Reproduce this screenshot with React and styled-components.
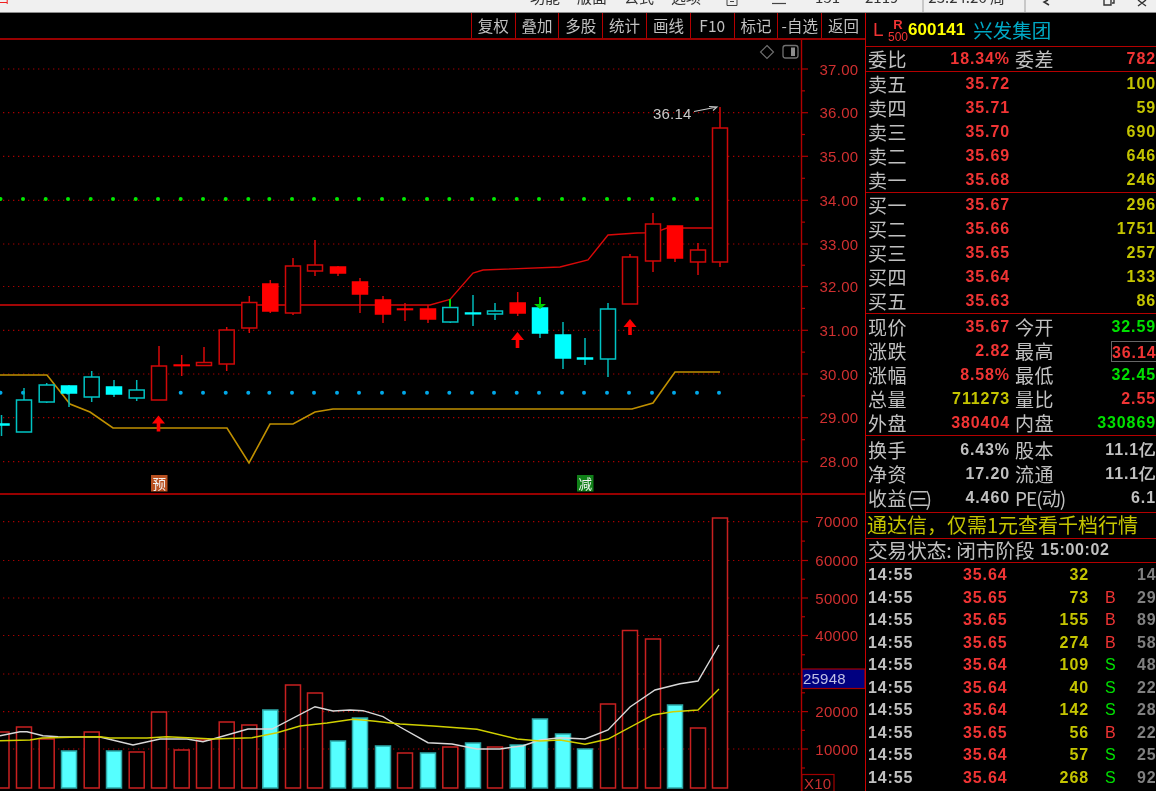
import React from "react";
import styled, { createGlobalStyle } from "styled-components";

const Global = createGlobalStyle`
  html, body { margin: 0; padding: 0; background: #000; overflow: hidden; }
  #root { width: 1156px; height: 791px; }
`;

const NUM = `"Liberation Sans", Arial, sans-serif`;
const CJK = `"Noto Sans CJK SC", "Noto Sans", sans-serif`;
const RED = "#f03434";
const YELLOW = "#c4c400";
const GREEN = "#00e000";
const GREY = "#c0c0c0";
const LINE = "#b40000";

const Page = styled.div`
  width: 1156px;
  height: 791px;
  overflow: hidden;
  background: #000;
  display: flex;
  flex-direction: column;
  filter: blur(0.35px);
`;

/* ---------- window title bar (mostly cut off at the top) ---------- */
const TitleBar = styled.div`
  height: 12px;
  flex: none;
  display: flex;
  background: #f0f0f0;
  border-bottom: 1.5px solid #8c8c8c;
  overflow: hidden;
  font: 15px/15px ${CJK};
  color: #333;
`;
const TitleItem = styled.span`
  margin-left: ${(p) => p.$left}px;
  margin-top: -11px;
  white-space: nowrap;
  flex: none;
`;
const TitleCell = styled.div`
  margin-left: ${(p) => p.$left}px;
  width: ${(p) => p.$width}px;
  flex: none;
  border-left: 2px solid #c8c8c8;
  border-right: 2px solid #c8c8c8;
  padding-left: 4px;
  display: flex;
`;
const TitleIcon = styled.svg`
  margin-left: ${(p) => p.$left}px;
  flex: none;
`;

const Main = styled.div`
  flex: 1;
  display: flex;
  min-height: 0;
`;
const ChartColumn = styled.div`
  width: 865px;
  flex: none;
  display: flex;
  flex-direction: column;
`;
const Toolbar = styled.div`
  height: 25px;
  flex: none;
  display: flex;
  justify-content: flex-end;
  border-bottom: 2px solid #980000;
`;
const ToolButton = styled.div`
  width: 43.8px;
  box-sizing: border-box;
  border-left: 1px solid ${LINE};
  color: ${GREY};
  font: 15.5px/24px ${CJK}, ${NUM};
  text-align: center;
  white-space: nowrap;
`;
const KPane = styled.div`
  height: 453px;
  flex: none;
  border-bottom: 2px solid #980000;
`;
const VolPane = styled.div`
  flex: 1;
  min-height: 0;
`;
const ChartSvg = styled.svg`
  display: block;
  width: 866px;
  height: 100%;
  overflow: visible;
`;
const AxisText = styled.text`
  font: 15px ${NUM};
  letter-spacing: 0.3px;
  fill: #d03030;
  text-anchor: end;
  dominant-baseline: central;
`;
const NoteText = styled.text`
  font: 15px ${NUM};
  letter-spacing: 0.2px;
  fill: ${(p) => p.$color};
  dominant-baseline: central;
`;
const BadgeText = styled.text`
  font: 13.5px ${CJK};
  fill: #f4f4f4;
  text-anchor: middle;
  dominant-baseline: central;
`;

/* ---------- quote panel ---------- */
const Panel = styled.div`
  flex: 1;
  min-width: 0;
  border-left: 1px solid #c80000;
  display: flex;
  flex-direction: column;
  overflow: hidden;
`;
const Section = styled.div`
  flex: none;
  border-bottom: 1px solid ${LINE};
  padding: ${(p) => p.$pad || "0"};
`;
const Header = styled(Section)`
  height: 33px;
  display: flex;
  align-items: center;
  padding-left: 7px;
`;
const Level = styled.span`
  font: 19px ${NUM};
  color: ${RED};
  width: 15px;
`;
const LevelStack = styled.span`
  display: flex;
  flex-direction: column;
  align-items: center;
  width: 20px;
  color: ${RED};
  font: 12px/12px ${NUM};
  margin-top: 2px;
`;
const LevelR = styled.span`
  font: bold 13px/13px ${NUM};
`;
const Code = styled.span`
  font: bold 17px ${NUM};
  color: #ffff00;
  letter-spacing: 0.1px;
`;
const StockName = styled.span`
  font: 19.5px ${CJK};
  color: #00a8c4;
  margin-left: 8px;
`;
const QuoteRow = styled.div`
  height: 24px;
  display: grid;
  grid-template-columns: 40px 102px 40px 1fr;
  column-gap: 0;
  align-items: center;
  padding-left: 2px;
  white-space: nowrap;
`;
const Label = styled.span`
  font: 19px/24px ${CJK};
  color: ${GREY};
  letter-spacing: 0.5px;
`;
const SecondLabel = styled(Label)`
  padding-left: 5px;
  grid-column: 3;
`;
const Narrow = styled.span`
  letter-spacing: ${(p) => p.$spacing}px;
`;
const Value = styled.span`
  font: bold 16px/24px ${NUM};
  letter-spacing: 0.9px;
  color: ${(p) => p.$color};
  text-align: right;
  grid-column: ${(p) => p.$col};
`;
const BoxedValue = styled(Value)`
  justify-self: end;
  line-height: 21px;
  height: 21px;
  width: 45px;
  box-sizing: border-box;
  border: 1px solid #666;
  border-right: none;
  margin-top: 1px;
`;
const Banner = styled(Section)`
  height: 25px;
  font: 20px/23px ${CJK};
  color: ${YELLOW};
  padding-left: 1px;
  white-space: nowrap;
`;
const Status = styled(Section)`
  height: 23px;
  display: flex;
  align-items: flex-start;
  padding-left: 2px;
  font: 19.6px/21px ${CJK};
  color: ${GREY};
  white-space: nowrap;
`;
const StatusTime = styled.span`
  font: bold 16px/21px ${NUM};
  letter-spacing: 0.6px;
  margin-left: 6px;
`;
const TickList = styled.div`
  padding-top: 1px;
`;
const TickRow = styled.div`
  height: 22.5px;
  display: grid;
  grid-template-columns: 95px 44px 82px 48px 1fr;
  align-items: center;
  padding-left: 2px;
  font: bold 16px/22px ${NUM};
  letter-spacing: 0.9px;
  white-space: nowrap;
`;
const TickCell = styled.span`
  color: ${(p) => p.$color};
  text-align: ${(p) => (p.$right ? "right" : "left")};
`;
const TickFlag = styled.span`
  padding-left: 16px;
  font-weight: normal;
  color: ${(p) => (p.$flag === "B" ? RED : GREEN)};
`;

/* ---------- data ---------- */
const XS = [1.5,24,46.7,69,91.7,114,136.7,159,181.7,204,226.7,249.3,270.3,293,315,338,360,383,405,428,450.3,473,495,517.7,540,563,585,608,630,653,675,698,720];
// wick top, wick bottom, body top, body bottom, kind
const CANDLES = [
  [415,436,424,425,"cf"],[388,432,400,432,"ch"],[383,403,385,402,"ch"],[385,407,386,393,"cf"],
  [371,402,377,397,"ch"],[380,397,387,394,"cf"],[380,401,390,398,"ch"],[346,400,366,400,"rh"],
  [355,376,365,365.6,"rf"],[347,365.5,362.5,365.5,"rh"],[327,371,330,364,"rh"],[296,333,302.5,328,"rh"],
  [280,313,284,311,"rf"],[258,315,266,313,"rh"],[240,276,265,271,"rh"],[266,276,267,273,"rf"],
  [278,313,282,294,"rf"],[296,323,300,314,"rf"],[303,321,309,309.6,"rf"],[305,323,309,319,"rf"],
  [307,323,307.5,322,"ch"],[295,326,313,313.8,"cf"],[303,320,311,314,"ch"],[292,316,303,313,"rf"],
  [308,338,308,333,"cf"],[322,369,335,358,"cf"],[338,365,358,359,"cf"],[303,377,309,359,"ch"],
  [254,304,257,304,"rh"],[213,272,224,261,"rh"],[226,262,226,258,"rf"],[243,275,250,262,"rh"],
  [107,267,128,262,"rh"],
];
const VOLS = [[732,"r"],[727,"r"],[739,"r"],[751,"c"],[732,"r"],[751,"c"],[752,"r"],[712,"r"],[750,"r"],[740,"r"],[722,"r"],[725,"r"],[710,"c"],[685,"r"],[693,"r"],[741,"c"],[718,"c"],[746,"c"],[753,"r"],[753,"c"],[747,"r"],[743,"c"],[747,"r"],[745,"c"],[719,"c"],[734,"c"],[749,"c"],[704,"r"],[630.5,"r"],[639,"r"],[705,"c"],[728,"r"],[518,"r"]];
const PRICE_Y = [[37,69],[36,112.7],[35,156.3],[34,200.3],[33,244],[32,286.5],[31,330.3],[30,374],[29,417.7],[28,461.7]];
const VOL_Y = [[70000,521.7],[60000,560.5],[50000,598],[40000,635.5],[30000,674],[20000,711.6],[10000,749]];

const RED_LINE = "0,305 430,305 450,299.5 473,273 483,270 560,267 588,260 608,235 637,233 645,232.7 660,230.6 667,228 714,228";
const GOLD_LINE = "0,375 47,375 70,404 90,412 113,428 227,428 249,463 270,424 293,424 315,412 333,409 632,409 653,403 675,372 720,372";
const WHITE_LINE = "0,735.7 20,731.7 27,731.7 43,735.7 58,736.7 100,737 133,745 160,739 187,739 203,741.7 213,739 248,729 272,729 315,706.7 333,711 350,710 363,710.7 383,716.7 400,727 428,742.7 452,744 477,749 500,749 523,745.7 540,740 560,737.7 585,739 608,730 630,707 655,690 680,683.7 698,681 719,645";
const YELLOW_LINE = "0,740.7 30,740 42,738 80,737 100,736.7 110,738 147,738 167,736.7 193,738 213,739 252,737.7 277,732.7 300,726 327,723 353,719.3 373,721 400,724 433,726 477,729.3 517,739 540,741 560,740 585,744.3 608,739 653,715 673,711.7 698,710 719,689";

const SELLS = [["卖五","35.72","100"],["卖四","35.71","59"],["卖三","35.70","690"],["卖二","35.69","646"],["卖一","35.68","246"]];
const BUYS = [["买一","35.67","296"],["买二","35.66","1751"],["买三","35.65","257"],["买四","35.64","133"],["买五","35.63","86"]];
const QUOTES = [
  ["现价","35.67",RED,"今开","32.59",GREEN],
  ["涨跌","2.82",RED,"最高","36.14",RED,true],
  ["涨幅","8.58%",RED,"最低","32.45",GREEN],
  ["总量","711273",YELLOW,"量比","2.55",RED],
  ["外盘","380404",RED,"内盘","330869",GREEN],
];
const FINANCE = [
  ["换手","6.43%","股本","11.1亿"],
  ["净资","17.20","流通","11.1亿"],
  [<>收益<Narrow $spacing={-3.5}>(三)</Narrow></>,"4.460",<Narrow $spacing={-1}>PE(动)</Narrow>,"6.1"],
];
const TICKS = [
  ["35.64","32","","14"],["35.65","73","B","29"],["35.65","155","B","89"],["35.65","274","B","58"],["35.64","109","S","48"],
  ["35.64","40","S","22"],["35.64","142","S","28"],["35.65","56","B","22"],["35.64","57","S","25"],["35.64","268","S","92"],
];
const TOOLS = ["复权","叠加","多股","统计","画线","F10","标记","-自选","返回"];

/* ---------- chart drawings ---------- */
const GridLines = ({ ys }) =>
  ys.map((y) => (
    <g key={y}>
      <line x1="3" x2="800" y1={y} y2={y} stroke="#a80000" strokeWidth="1.2" strokeDasharray="1.3 3.7" />
      <line x1="802" x2="808" y1={y} y2={y} stroke="#b00000" strokeWidth="1.2" />
    </g>
  ));
const MinorTicks = ({ ys }) =>
  ys.map((y) => <line key={y} x1="802" x2="805" y1={y} y2={y} stroke="#b00000" strokeWidth="1.2" />);

const Candle = ({ x, c }) => {
  const [wt, wb, bt, bb, kind] = c;
  const cyan = kind[0] === "c";
  const filled = kind[1] === "f";
  const stroke = cyan ? (filled ? "#00ffff" : "#00c4c4") : filled ? "#ff0000" : "#d00808";
  const wick = cyan ? "#00b8b8" : "#d80808";
  return (
    <g>
      <line x1={x} x2={x} y1={wt} y2={wb} stroke={wick} strokeWidth="1.5" />
      <rect x={x - 7.5} y={bt} width="15" height={Math.max(bb - bt, 0.6)} fill={filled ? (cyan ? "#00ffff" : "#ff0000") : "#000"} stroke={stroke} strokeWidth="1.5" />
    </g>
  );
};
const UpArrow = ({ x, y }) => (
  <path d={`M${x} ${y}l6.5 8h-4.7v8h-3.6v-8h-4.7z`} fill="#ff0000" />
);

const KLineChart = () => (
  <ChartSvg viewBox="0 40 866 453">
    <GridLines ys={PRICE_Y.map((p) => p[1])} />
    <MinorTicks ys={PRICE_Y.slice(0, -1).map((p, i) => (p[1] + PRICE_Y[i + 1][1]) / 2)} />
    <line x1="801.5" x2="801.5" y1="40" y2="493" stroke="#b00000" strokeWidth="1.4" />
    {XS.slice(0, 32).map((x) => <circle key={x} cx={x - 1} cy="199" r="2" fill="#00e800" />)}
    {XS.map((x) => <circle key={x} cx={x - 1} cy="392.8" r="2" fill="#00a8e8" />)}
    <polyline points={RED_LINE} fill="none" stroke="#d80808" strokeWidth="1.4" />
    <polyline points={GOLD_LINE} fill="none" stroke="#c09000" strokeWidth="1.6" />
    {XS.map((x, i) => <Candle key={x} x={x} c={CANDLES[i]} />)}
    <line x1="450" x2="450" y1="299" y2="307" stroke="#00d000" strokeWidth="2" />
    <line x1="540" x2="540" y1="297" y2="308" stroke="#00d000" strokeWidth="2" />
    <path d="M534 304h12l-6 5z" fill="#00d000" />
    <UpArrow x={158.5} y={415.5} />
    <UpArrow x={517.5} y={332} />
    <UpArrow x={630} y={319} />
    {PRICE_Y.map(([v, y]) => <AxisText key={v} x="858.5" y={y}>{v}.00</AxisText>)}
    <NoteText x="653" y="113" $color="#c8c8c8">36.14</NoteText>
    <path d="M694 111.5l23-4.5M709 106.5l8 .5-4 3.5" fill="none" stroke="#c8c8c8" strokeWidth="1.1" />
    <path d="M767 45.5l6.5 6.5-6.5 6.5-6.5-6.5z" fill="none" stroke="#707070" strokeWidth="1.1" />
    <rect x="783" y="45.5" width="15" height="12.5" rx="2.5" fill="none" stroke="#707070" strokeWidth="1.3" />
    <rect x="791" y="47.5" width="4" height="8.5" fill="#8c8c8c" />
    <rect x="151" y="475" width="16.5" height="16.5" fill="#b85020" />
    <BadgeText x="159.3" y="483">预</BadgeText>
    <rect x="577" y="475" width="16.5" height="16.5" fill="#108018" />
    <BadgeText x="585.3" y="483">减</BadgeText>
  </ChartSvg>
);

const VolumeChart = () => (
  <ChartSvg viewBox="0 495 866 296">
    <GridLines ys={VOL_Y.map((p) => p[1])} />
    <MinorTicks ys={VOL_Y.slice(0, -1).map((p, i) => (p[1] + VOL_Y[i + 1][1]) / 2).concat(768)} />
    <line x1="801.5" x2="801.5" y1="495" y2="791" stroke="#b00000" strokeWidth="1.4" />
    {XS.map((x, i) => {
      const [top, kind] = VOLS[i];
      const cyan = kind === "c";
      return (
        <rect key={x} x={x - 7.5} y={top} width="15" height={788 - top}
          fill={cyan ? "#55ffff" : "#000"} stroke={cyan ? "#2ca8a8" : "#c82020"} strokeWidth="1.5" />
      );
    })}
    <polyline points={WHITE_LINE} fill="none" stroke="#d8d8d8" strokeWidth="1.4" />
    <polyline points={YELLOW_LINE} fill="none" stroke="#d0d000" strokeWidth="1.4" />
    {VOL_Y.filter((p) => p[0] !== 30000).map(([v, y]) => <AxisText key={v} x="858.5" y={y}>{v}</AxisText>)}
    <rect x="802" y="669" width="63" height="19.5" fill="#000080" stroke="#a00000" strokeWidth="1.2" />
    <NoteText x="803" y="678.5" $color="#c0c0e4">25948</NoteText>
    <rect x="802" y="774.5" width="32" height="17" fill="#000" stroke="#a00000" strokeWidth="1.2" />
    <NoteText x="804" y="783.5" $color="#c83030">X10</NoteText>
  </ChartSvg>
);

export default function App() {
  return (
    <Page>
      <Global />
      <TitleBar>
        <svg width="8" height="12" viewBox="0 0 8 12"><path d="M0 2.5h7M7.2 0v4" stroke="#f02020" strokeWidth="1" fill="none" /></svg>
        <TitleItem $left={522}>功能</TitleItem>
        <TitleItem $left={17}>版面</TitleItem>
        <TitleItem $left={17}>公式</TitleItem>
        <TitleItem $left={17}>选项</TitleItem>
        <TitleIcon $left={25} width="12" height="12" viewBox="0 0 12 12"><path d="M1 0v5.5h10V0M4 1.5h4" fill="none" stroke="#444" /></TitleIcon>
        <TitleIcon $left={33} width="16" height="12" viewBox="0 0 16 12"><path d="M1 3.5h14" fill="none" stroke="#444" strokeWidth="1.2" /></TitleIcon>
        <TitleItem $left={28}>151</TitleItem>
        <TitleItem $left={25}>2119</TitleItem>
        <TitleCell $left={24} $width={96}><TitleItem $left={0}>23:24:26 周</TitleItem></TitleCell>
        <TitleIcon $left={16} width="12" height="12" viewBox="0 0 12 12"><path d="M6 0L2 2l5 3" fill="none" stroke="#333" strokeWidth="1.5" /></TitleIcon>
        <TitleIcon $left={49} width="12" height="12" viewBox="0 0 12 12"><path d="M1 0v5h7V0M9 3h2V0" fill="none" stroke="#333" strokeWidth="1.4" /></TitleIcon>
        <TitleIcon $left={21} width="12" height="12" viewBox="0 0 12 12"><path d="M2 0l4 3 4-3M2 6l4-3 4 3" fill="none" stroke="#333" strokeWidth="1.4" /></TitleIcon>
      </TitleBar>
      <Main>
        <ChartColumn>
          <Toolbar>
            {TOOLS.map((t) => <ToolButton key={t}>{t}</ToolButton>)}
          </Toolbar>
          <KPane><KLineChart /></KPane>
          <VolPane><VolumeChart /></VolPane>
        </ChartColumn>
        <Panel>
          <Header>
            <Level>L</Level>
            <LevelStack><LevelR>R</LevelR><span>500</span></LevelStack>
            <Code>600141</Code>
            <StockName>兴发集团</StockName>
          </Header>
          <Section>
            <QuoteRow>
              <Label>委比</Label>
              <Value $color={RED} $col={2}>18.34%</Value>
              <SecondLabel>委差</SecondLabel>
              <Value $color={RED} $col={4}>782</Value>
            </QuoteRow>
          </Section>
          <Section>
            {SELLS.map(([l, p, q]) => (
              <QuoteRow key={l}>
                <Label>{l}</Label>
                <Value $color={RED} $col={2}>{p}</Value>
                <Value $color={YELLOW} $col={4}>{q}</Value>
              </QuoteRow>
            ))}
          </Section>
          <Section>
            {BUYS.map(([l, p, q]) => (
              <QuoteRow key={l}>
                <Label>{l}</Label>
                <Value $color={RED} $col={2}>{p}</Value>
                <Value $color={YELLOW} $col={4}>{q}</Value>
              </QuoteRow>
            ))}
          </Section>
          <Section $pad="1px 0 0">
            {QUOTES.map(([l, v, c, l2, v2, c2, boxed]) => (
              <QuoteRow key={l}>
                <Label>{l}</Label>
                <Value $color={c} $col={2}>{v}</Value>
                <SecondLabel>{l2}</SecondLabel>
                {boxed ? <BoxedValue $color={c2} $col={4}>{v2}</BoxedValue> : <Value $color={c2} $col={4}>{v2}</Value>}
              </QuoteRow>
            ))}
          </Section>
          <Section $pad="2px 0 2px">
            {FINANCE.map(([l, v, l2, v2], i) => (
              <QuoteRow key={i}>
                <Label>{l}</Label>
                <Value $color={GREY} $col={2}>{v}</Value>
                <SecondLabel>{l2}</SecondLabel>
                <Value $color={GREY} $col={4}>{v2}</Value>
              </QuoteRow>
            ))}
          </Section>
          <Banner>通达信，仅需1元查看千档行情</Banner>
          <Status>交易状态: 闭市阶段<StatusTime>15:00:02</StatusTime></Status>
          <TickList>
            {TICKS.map(([p, v, f, n], i) => (
              <TickRow key={i}>
                <TickCell $color={GREY}>14:55</TickCell>
                <TickCell $color={RED} $right>{p}</TickCell>
                <TickCell $color={YELLOW} $right>{v}</TickCell>
                <TickFlag $flag={f}>{f}</TickFlag>
                <TickCell $color="#808080">{n}</TickCell>
              </TickRow>
            ))}
          </TickList>
        </Panel>
      </Main>
    </Page>
  );
}
